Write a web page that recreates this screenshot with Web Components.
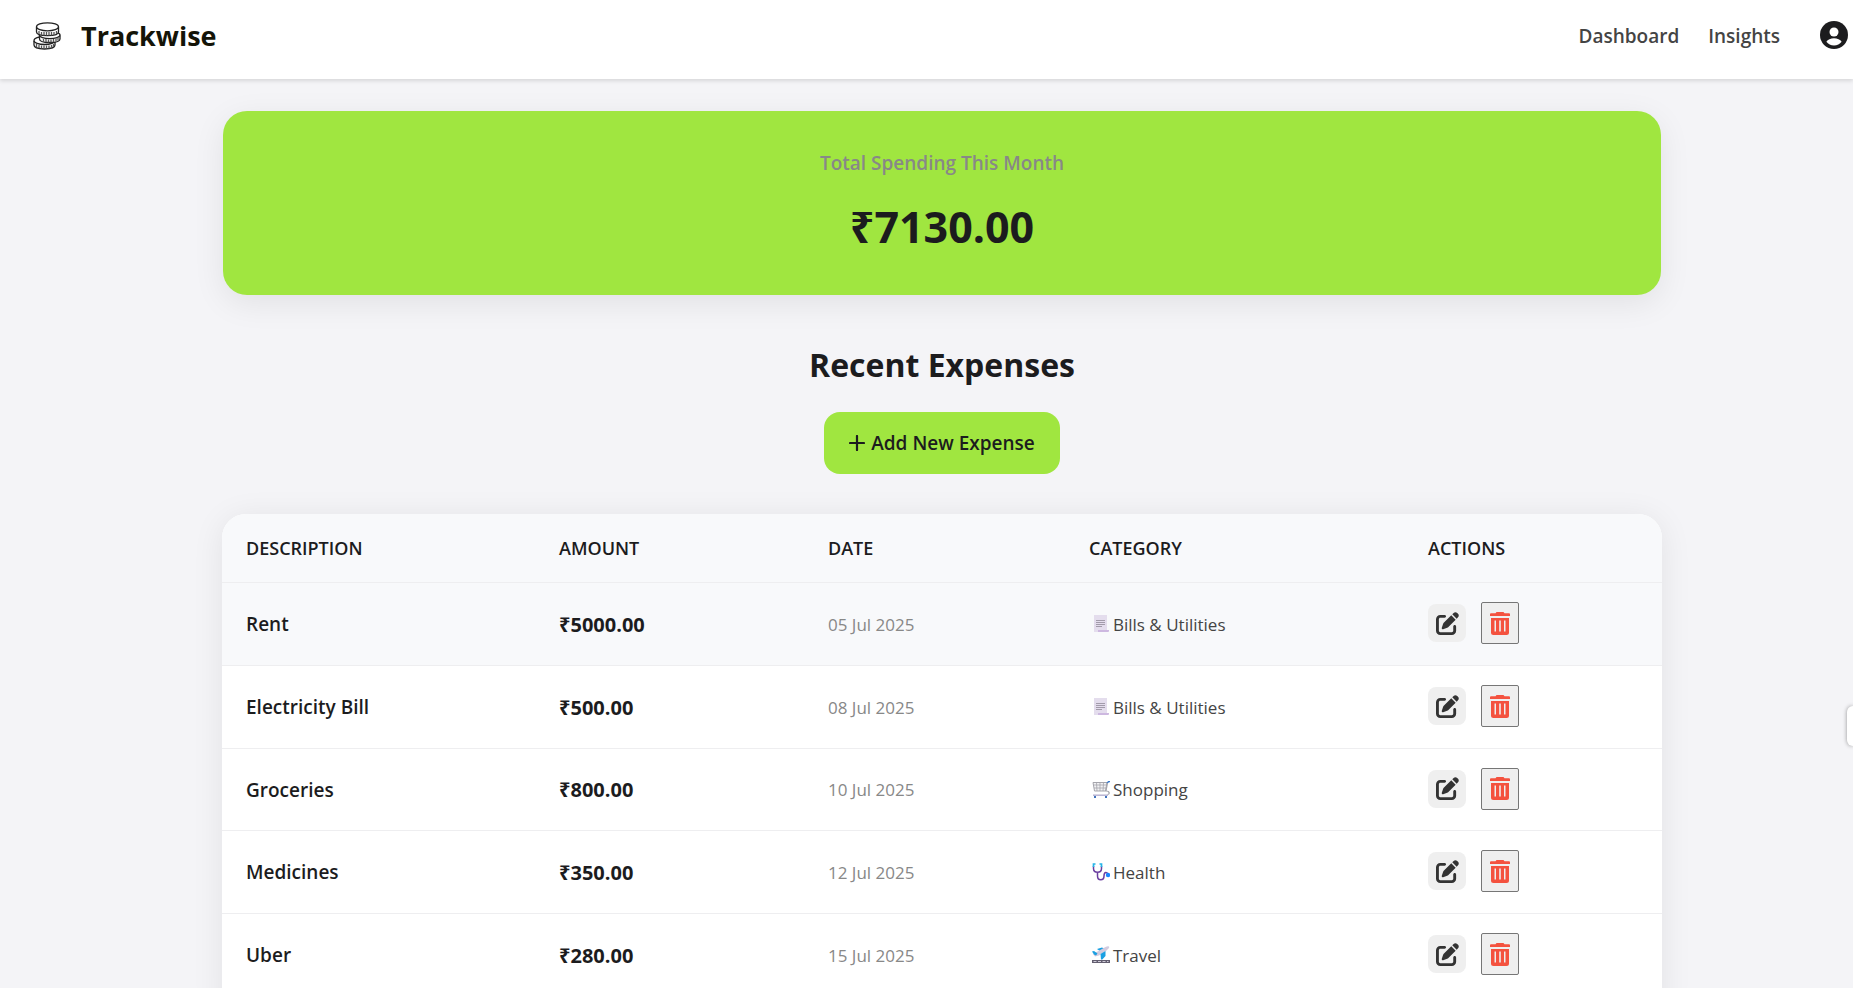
<!DOCTYPE html>
<html lang="en">
<head>
<meta charset="utf-8">
<meta name="viewport" content="width=device-width, initial-scale=1">
<title>Trackwise</title>
<style>
  html { background: #f4f4f7; }
  body {
    margin: 0;
    overflow-x: hidden;
    color: #1c1c1e;
    font-family: "Open Sans", "Noto Sans", sans-serif;
    font-size: 16px;
    --lime: #a0e640;
    --line: #eeeef0;
    --soft: #f8f9fb;
  }
  .page {
    display: flex;
    flex-direction: column;
    align-items: stretch;
    max-width: 1440px;
    margin: 0 auto;
  }
  main { padding: 32px 0 32px 31px; }
</style>
</head>
<body>
<tw-header>
  <a slot="nav" href="#dashboard">Dashboard</a>
  <a slot="nav" href="#insights">Insights</a>
</tw-header>
<main>
  <div class="page">
    <tw-summary>
      <span slot="label">Total Spending This Month</span>
      <span slot="amount">₹7130.00</span>
    </tw-summary>
    <tw-section-head>
      <span slot="title">Recent Expenses</span>
      <span slot="action">Add New Expense</span>
    </tw-section-head>
    <tw-expenses></tw-expenses>
  </div>
</main>
<tw-side-tab></tw-side-tab>

<script>
const ICONS = {
  coins: `<svg viewBox="0 0 28 28" width="28" height="28" fill="#fff" stroke="#222" stroke-width="1.300">
    <path d="M1 19v4c0 2.400 4.600 4 10.500 4s10.500-1.600 10.500-4v-4"/>
    <ellipse cx="11.500" cy="18.500" rx="10.500" ry="4"/>
    <path d="M3.500 22v3.500M6 23v3M8.500 23.500v3M11 23.500v3M13.500 23.500v3M16 23.500v3M18.500 23v3M20.500 22v3" stroke="#555"/>
    <path d="M6.500 13.500v3.500c0 2.200 4.400 3.500 10.200 3.500s10.300-1.400 10.300-3.500v-3.500"/>
    <ellipse cx="16.700" cy="13" rx="10.300" ry="3.600"/>
    <path d="M10.500 17v3M13 17v3M15.500 17.500v3M18 17.500v3M20.500 17v3M23 16.500v3M25 15.500v3" stroke="#555"/>
    <path d="M3.500 5v5c0 2.200 4.700 3.600 11 3.600s11-1.400 11-3.600v-5"/>
    <path d="M6 9v3M8.500 10v3M11 10v3.500M13.500 10v3.500M16 10v3.500M18.500 10v3.500M21 10v3M23.500 9v3" stroke="#555"/>
    <ellipse cx="14.500" cy="4.800" rx="11" ry="4"/></svg>`,
  user: `<svg viewBox="0 0 28 28" width="28" height="28"><circle cx="14" cy="14" r="14" fill="#1c1c1e"/>
    <circle cx="14" cy="11" r="4.500" fill="#fff"/><path fill="#fff" d="M6.400 20.800C7.500 18.500 10.800 17.300 14 17.300s6.500 1.200 7.600 3.500C19.800 23.200 17.200 24.500 14 24.500s-5.800-1.300-7.600-3.700z"/></svg>`,
  plus: `<svg viewBox="0 0 16 16" width="16" height="16" fill="none" stroke="#1c1c1e" stroke-width="2.200" stroke-linecap="round"><path d="M8 1v14M1 8h14"/></svg>`,
  edit: `<svg viewBox="0 0 512 512" width="23" height="23" fill="#333"><path d="M471.600 21.700c-21.900-21.900-57.300-21.900-79.200 0L362.300 51.700l97.900 97.900 30.100-30.100c21.900-21.900 21.900-57.300 0-79.200L471.600 21.700zm-299.200 220c-6.100 6.100-10.800 13.600-13.500 21.900l-29.600 88.800c-2.900 8.600-.6 18.100 5.800 24.600s15.900 8.700 24.600 5.800l88.800-29.600c8.200-2.700 15.700-7.400 21.900-13.500L437.700 172.300 339.700 74.300 172.400 241.700zM96 64C43 64 0 107 0 160V416c0 53 43 96 96 96H352c53 0 96-43 96-96V320c0-17.700-14.300-32-32-32s-32 14.300-32 32v96c0 17.700-14.300 32-32 32H96c-17.700 0-32-14.300-32-32V160c0-17.700 14.300-32 32-32h96c17.700 0 32-14.300 32-32s-14.300-32-32-32H96z"/></svg>`,
  trash: `<svg viewBox="0 0 20 23" width="20" height="23"><path fill="#f4523f" fill-rule="evenodd" d="M6.500 0h7l1 1.200H19a1 1 0 0 1 1 1V4H0V2.200a1 1 0 0 1 1-1h4.500zM1 6h18v14.500a2.500 2.500 0 0 1-2.500 2.500h-13A2.500 2.500 0 0 1 1 20.500zM4.500 8.500v11h1.500v-11zM9.200 8.500v11h1.600v-11zM14 8.500v11h1.500v-11z"/></svg>`,
  bills: `<svg viewBox="0 0 18 18" width="18" height="18"><path fill="#e4dded" d="M2 0h13v16H2z"/><path fill="#cdb8e0" d="M6 15h11v1a1 1 0 0 1-1 1H6z"/><path fill="#e4dded" d="M2 15h4v2H2z"/><path stroke="#a29baa" stroke-width="1" d="M4 5.500h9M4 7.500h9M4 9.500h9M4 11.500h6"/></svg>`,
  shopping: `<svg viewBox="0 0 18 18" width="18" height="18" fill="none"><path fill="#f2f2f4" stroke="#a5a5ac" d="M1 1.500h14l-1.500 8.500H2.500z"/><path stroke="#a5a5ac" stroke-width=".8" d="M1.500 4h13M2 7h12M4.500 1.500l.5 8.500M8 1.500V10M11.500 1.500L11 10"/><path stroke="#3778c8" stroke-width="1.300" d="M15 2.500L16.500.500H18"/><path stroke="#a5a5ac" stroke-width="1.200" d="M15.500 2L14 10c4 0 4 3.500 1.500 3.500"/><path stroke="#b9b4d2" stroke-width="1.500" d="M1 14.200h15"/><path fill="#3f73bd" d="M2 15h2v2H2zM13 15h2v2h-2z"/></svg>`,
  health: `<svg viewBox="0 0 18 18" width="18" height="18" fill="none" stroke-width="1.500"><path stroke="#6b3fa0" d="M1.500 3v2.500c0 5 8 5 8 0V3M5.500 9.500V13c0 5 6.500 5 6.500 0s3.500-4 4-1.500"/><path stroke="#25b5e8" stroke-width="1.700" d="M1.500 4V1H3.500M9.500 4V1H7.500"/><circle cx="16" cy="12" r="2.200" fill="#1a86ff"/></svg>`,
  travel: `<svg viewBox="0 0 18 18" width="18" height="18"><path fill="#635e70" d="M0 14h18v3H0z"/><path stroke="#cfcbd8" d="M1.500 15.500h15" stroke-dasharray="3 1.500"/><path fill="#1ba0e2" d="M5 3l5-1.500 4 2-4 3z"/><path fill="#d3cbdf" d="M1 8L14 .7c2-1 3.800-.5 3 1.300L14.500 4.500 7 9.500 3 10.500z"/><path fill="#1ba0e2" d="M8.500 8l5-3v5l-3.200 3.500H9zM0 5.500l2-.5 3.500 2.500L4 9.500l-2-1z"/></svg>`
};

class Base extends HTMLElement {
  connectedCallback() {
    if (this.shadowRoot) return;
    this.attachShadow({ mode: "open" }).innerHTML = this.render();
  }
}

customElements.define("tw-icon", class extends Base {
  render() {
    return `<style>:host{display:inline-flex;flex:none}svg{display:block}</style>${ICONS[this.getAttribute("name")]}`;
  }
});

customElements.define("tw-header", class extends Base {
  render() {
    return `<style>
      :host { display: block; position: relative; background: #fff; box-shadow: 0 2px 4px rgba(0,0,0,.12); }
      header { display: flex; align-items: center; justify-content: space-between; min-height: 71px; padding: 0 5px 8px 33px; }
      .brand { display: flex; align-items: center; gap: 20px; color: #141408; text-decoration: none; font-size: 27px; line-height: 40px; font-weight: 700; }
      nav { display: flex; align-items: center; }
      ::slotted(a) { margin-right: 29px; color: #444; text-decoration: none; font-size: 19px; line-height: 28px; font-weight: 600; }
      button { display: flex; margin: 0 0 2px 11px; padding: 0; border: 0; background: none; }
    </style>
    <header>
      <a class="brand" href="#home"><tw-icon name="coins"></tw-icon>Trackwise</a>
      <nav><slot name="nav"></slot><button aria-label="Account"><tw-icon name="user"></tw-icon></button></nav>
    </header>`;
  }
});

customElements.define("tw-summary", class extends Base {
  render() {
    return `<style>
      :host { display: block; margin: 0 1px; padding: 36px 24px; border-radius: 24px; background: var(--lime); text-align: center; box-shadow: 0 8px 32px rgba(0,0,0,.08); }
      .label { margin: 0 0 16px; color: #888; font-size: 19px; line-height: 32px; font-weight: 600; }
      .amount { margin: 0; font-size: 43px; line-height: 64px; font-weight: 700; }
    </style>
    <p class="label"><slot name="label"></slot></p><p class="amount"><slot name="amount"></slot></p>`;
  }
});

customElements.define("tw-section-head", class extends Base {
  render() {
    return `<style>
      :host { display: flex; flex-direction: column; align-items: center; gap: 25px; padding: 48px 0 40px; }
      h2 { margin: 0; font-size: 32px; line-height: 44px; font-weight: 700; }
      button { display: flex; align-items: center; gap: 6px; padding: 17px 25px; border: 0; border-radius: 16px; background: var(--lime); color: #1c1c1e; font: 600 19px/28px "Open Sans", "Noto Sans", sans-serif; }
    </style>
    <h2><slot name="title"></slot></h2>
    <button><tw-icon name="plus"></tw-icon><slot name="action"></slot></button>`;
  }
});

customElements.define("tw-expenses", class extends Base {
  render() {
    const rows = [
      ["Rent", "₹5000.00", "05 Jul 2025", "bills", "Bills &amp; Utilities"],
      ["Electricity Bill", "₹500.00", "08 Jul 2025", "bills", "Bills &amp; Utilities"],
      ["Groceries", "₹800.00", "10 Jul 2025", "shopping", "Shopping"],
      ["Medicines", "₹350.00", "12 Jul 2025", "health", "Health"],
      ["Uber", "₹280.00", "15 Jul 2025", "travel", "Travel"]
    ];
    return `<style>
      :host { display: block; overflow: hidden; padding-bottom: 24px; border-radius: 24px; background: #fff; box-shadow: 0 4px 32px rgba(0,0,0,.08); }
      table { width: 100%; table-layout: fixed; border-collapse: separate; border-spacing: 0; text-align: left; }
      .c1 { width: 313px; } .c2 { width: 269px; } .c3 { width: 261px; } .c4 { width: 339px; } .c5 { width: 258px; }
      th, td { box-sizing: border-box; padding: 0 24px; border-bottom: 1px solid var(--line); }
      th { height: 69px; background: var(--soft); font-size: 18px; font-weight: 600; text-transform: uppercase; }
      td { height: 83px; font-size: 17px; }
      tr:nth-child(3n) td { height: 82px; }
      tr.active td { background: var(--soft); }
      .name { font-size: 19px; font-weight: 600; }
      .amount { font-size: 20px; font-weight: 700; }
      .date { color: #888; }
      .cat { display: flex; align-items: center; gap: 3px; padding-left: 3px; color: #444; }
      .actions { display: flex; align-items: center; gap: 15px; padding-bottom: 2px; }
      button { display: flex; align-items: center; justify-content: center; width: 38px; padding: 0; background: #efefef; }
      .edit { height: 38px; border: 0; border-radius: 8px; }
      .del { height: 42px; border: 1px solid #767676; border-radius: 2px; }
    </style>
    <table>
      <colgroup><col class="c1"><col class="c2"><col class="c3"><col class="c4"><col class="c5"></colgroup>
      <thead><tr><th>Description</th><th>Amount</th><th>Date</th><th>Category</th><th>Actions</th></tr></thead>
      <tbody>${rows.map(([name, amount, date, icon, cat], i) => `
        <tr${i === 0 ? ' class="active"' : ""}>
          <td class="name">${name}</td><td class="amount">${amount}</td><td class="date">${date}</td>
          <td><div class="cat"><tw-icon name="${icon}"></tw-icon><span>${cat}</span></div></td>
          <td><div class="actions">
            <button class="edit" aria-label="Edit ${name}"><tw-icon name="edit"></tw-icon></button>
            <button class="del" aria-label="Delete ${name}"><tw-icon name="trash"></tw-icon></button>
          </div></td>
        </tr>`).join("")}</tbody>
    </table>`;
  }
});

customElements.define("tw-side-tab", class extends Base {
  render() {
    return `<style>
      :host { position: fixed; top: 706px; right: 0; width: 6px; height: 40px; border-radius: 8px 0 0 8px; background: #fff; box-shadow: 0 0 4px rgba(0,0,0,.4); }
    </style>`;
  }
});
</script>
</body>
</html>
